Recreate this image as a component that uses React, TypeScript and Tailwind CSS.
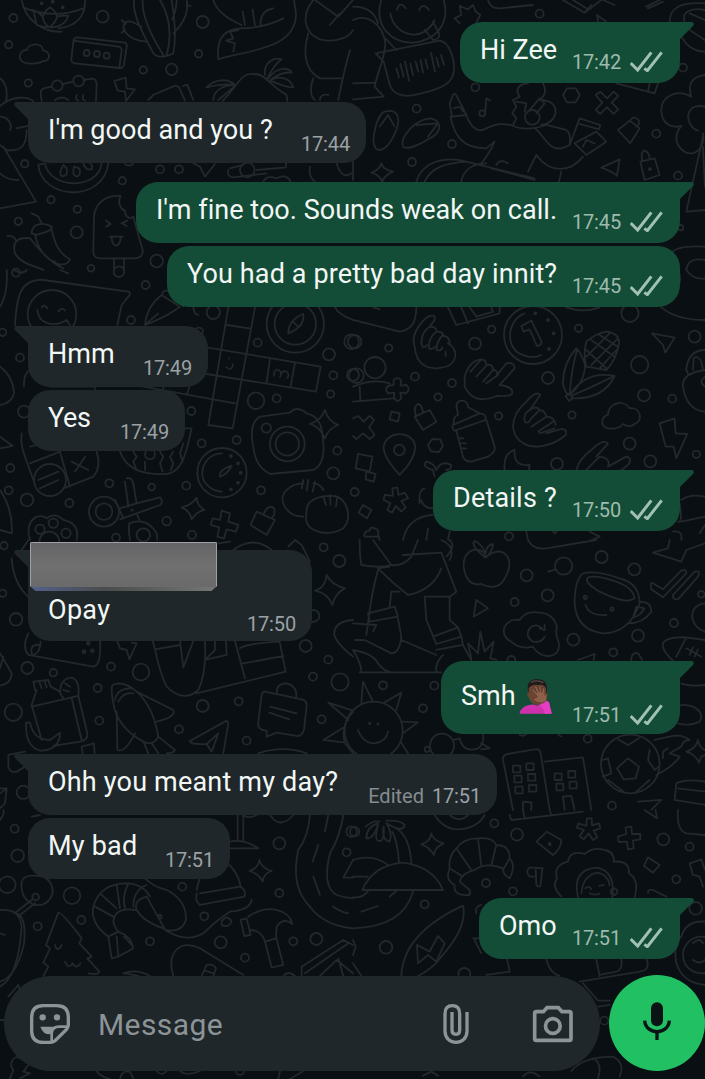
import { clsx } from 'clsx';

type Message = {
  text: string;
  time: string;
  sent?: boolean;
  tail?: boolean;
  edited?: boolean;
  emoji?: boolean;
  redacted?: boolean;
  // width, height and gap above the bubble
  box: string;
  tracking?: string;
};

const messages: Message[] = [
  { text: 'Hi Zee', time: '17:42', sent: true, tail: true, box: 'w-[220px] h-[61px]' },
  { text: "I'm good and you ?", time: '17:44', tail: true, box: 'w-[338px] h-[61px] mt-[19px]', tracking: 'tracking-[0.05px]' },
  { text: "I'm fine too. Sounds weak on call.", time: '17:45', sent: true, tail: true, box: 'w-[544px] h-[61px] mt-[19px]', tracking: 'tracking-[0.03px]' },
  { text: 'You had a pretty bad day innit?', time: '17:45', sent: true, box: 'w-[513px] h-[61px] mt-[3px]', tracking: 'tracking-[0.13px]' },
  { text: 'Hmm', time: '17:49', tail: true, box: 'w-[180px] h-[61px] mt-[19px]' },
  { text: 'Yes', time: '17:49', box: 'w-[157px] h-[61px] mt-[3px]', tracking: 'tracking-[-0.3px]' },
  { text: 'Details ?', time: '17:50', sent: true, tail: true, box: 'w-[247px] h-[61px] mt-[19px]', tracking: 'tracking-[0.2px]' },
  { text: 'Opay', time: '17:50', tail: true, redacted: true, box: 'w-[284px] h-[91px] mt-[19px]', tracking: 'tracking-[0.3px]' },
  { text: 'Smh', time: '17:51', sent: true, tail: true, emoji: true, box: 'w-[239px] h-[73px] mt-5' },
  { text: 'Ohh you meant my day?', time: '17:51', tail: true, edited: true, box: 'w-[469px] h-[61px] mt-5', tracking: 'tracking-[0.19px]' },
  { text: 'My bad', time: '17:51', box: 'w-[202px] h-[61px] mt-[3px]', tracking: 'tracking-[0.2px]' },
  { text: 'Omo', time: '17:51', sent: true, tail: true, box: 'w-[201px] h-[61px] mt-[19px]' },
];

type Sheet = { x: number; y: number; dots: number[][]; lines: string[] };

// Wallpaper doodles, drawn on eight sheets at three times their size
const sheets: Sheet[] = [
  {
    x: 0,
    y: 0,
    dots: [
      [40, 54, 12], [308, 50, 18], [608, 66, 18], [26, 134, 11], [596, 161, 11], [430, 210, 11], [515, 208, 17],
      [85, 249, 11], [74, 491, 11], [153, 599, 11], [232, 628, 11], [55, 664, 11], [230, 697, 18], [480, 508, 12],
      [537, 508, 12], [367, 542, 11], [470, 783, 19], [260, 159, 9], [291, 162, 9], [320, 167, 9], [273, 805, 10],
      [172, 257, 16], [236, 243, 16], [742, 510, 22], [125, 10, 3], [158, 5, 3], [188, 22, 3],
    ],
    lines: [
      // bowl and lotus
      'M65 0C75 60 130 98 185 95M255 0C258 50 225 80 175 85M70 22Q160 60 250 25M100 30Q115 35 128 50Q135 30 150 22Q165 30 172 50Q190 45 205 48C195 80 160 90 110 75ZM128 50Q130 70 145 80M172 50Q165 70 150 80',
      // cactus
      'M402 0C398 50 430 100 460 160Q475 180 520 160C530 110 525 60 515 0M428 0C425 50 455 110 490 165M480 0C510 50 515 110 500 165M438 125C380 120 355 80 380 65C400 60 410 75 425 80M365 60L378 72M375 90L365 98M520 100C560 60 565 30 560 0M530 0C530 30 520 50 516 60M560 15L572 18',
      'M232 112L375 128Q382 130 380 140L372 195Q368 206 358 204L225 190Q213 188 214 178L220 125Q222 112 232 112ZM220 122L355 140Q366 142 365 152L358 204',
      'M80 190C50 185 55 150 80 150C85 130 125 125 130 152C155 155 150 185 130 183C110 195 95 190 80 190Z',
      // fox tail
      'M655 178C650 130 660 90 720 85C790 85 840 60 850 55M655 178C740 150 890 150 888 40L882 0M715 90L690 95L700 115L678 122L705 130L700 155M640 0C650 35 690 60 725 75M728 35L735 75M758 30Q760 50 765 75M820 25C790 30 780 50 782 78',
      'M940 0C900 50 915 100 960 118C1010 130 1050 110 1059 90M945 0L1015 50L1059 0M990 75L1020 40M925 100C910 150 910 210 960 235L1025 235M940 235C930 260 930 290 945 300M1050 150Q1030 220 1015 300M960 300Q960 280 985 285',
      'M125 303L122 280Q122 265 140 263L155 260M190 252L220 245M250 240L275 236Q290 236 290 255L288 303M165 300Q185 285 205 300M230 285Q225 300 235 302M250 285Q245 300 255 302',
      'M343 243L377 233L380 265L405 268L378 303L375 275L353 272Z',
      'M445 300L460 285L525 257Q535 257 540 268L555 302M548 258L562 254L580 300',
      // pineapple top
      'M668 303C720 250 720 220 760 222C800 222 800 250 860 285L862 303M620 262C645 235 685 235 705 255C675 250 650 255 620 262M640 300C640 275 665 255 705 255M655 300L700 262M795 225C790 190 820 170 845 178C820 195 815 215 800 238M805 235C835 195 870 205 875 218C850 215 830 225 812 240C840 225 870 235 880 262C860 262 840 255 812 242',
      'M0 235C15 245 25 270 18 305M0 318C40 285 80 290 100 303M0 350C20 350 40 370 30 390M50 385L85 378M80 390C80 440 60 455 20 450L0 435M10 440L108 605L0 625M0 520Q20 540 55 540',
      'M115 495C125 600 310 610 325 490M135 490C150 570 295 570 305 490M115 495L135 490M190 495Q175 520 185 528Q205 530 200 505ZM222 500Q215 525 230 530Q245 525 238 505ZM250 490Q255 512 275 508Q280 495 270 490',
      // chillies
      'M95 640L115 650L125 670M95 700C95 670 130 665 155 680C160 690 130 700 110 705ZM105 705C115 750 140 780 165 785C170 795 200 800 210 778C175 760 165 730 155 690M22 708C40 705 45 715 50 725M45 760C35 725 55 710 90 715M45 760C60 790 110 800 130 810M90 715C110 740 150 790 190 805',
      'M300 775Q278 775 280 750L282 650C285 610 315 585 362 588C350 610 365 630 375 632C375 650 390 660 400 650L428 750Q430 775 400 775ZM318 662L332 672L318 680M382 662L365 670L380 678M330 710H368M335 712C335 745 362 745 362 712M342 778V810M372 778V810',
      'M690 505L730 495M685 510Q680 530 700 532L800 520M858 490V502L770 510M790 545Q800 525 830 535Q860 520 872 545M930 500Q925 530 945 545M580 490L600 500L615 530L645 492M375 492Q385 502 400 492M1010 490Q1025 540 1055 520',
    ],
  },
  {
    x: 353,
    y: 0,
    dots: [
      [560, 41, 12], [990, 203, 12], [367, 262, 12], [191, 326, 12], [297, 432, 12], [177, 486, 12], [910, 401, 12],
      [975, 527, 12], [538, 352, 22], [983, 683, 8], [388, 340, 9], [891, 507, 3],
    ],
    lines: [
      'M85 0C60 80 120 140 200 125C260 110 290 60 272 0M112 40C125 110 210 130 245 60M215 90L240 120Q262 118 258 100L240 65M132 30Q140 0 158 25M198 30Q210 5 228 30',
      'M305 55L325 45L320 18L345 28L360 15L368 35L382 45L370 68M305 55L320 70',
      'M0 60C40 40 90 70 97 130C95 180 75 210 65 260L92 290L0 298M0 250L65 248M0 20Q60 20 75 70M97 115L130 150',
      'M68 160L260 122C290 125 305 180 303 210C300 250 270 265 200 282C150 295 115 285 108 245L92 185Z',
      'M130 205L138 232M142 192L152 230M156 185L168 242M172 190L180 225M188 185L196 215M203 180L210 218M217 178L224 205M234 158L246 215M250 172L258 200M264 165L273 195',
      'M405 0Q410 25 440 25L540 15M630 0L695 38L745 0M660 0L705 28M695 38L715 15M785 15L750 0M880 20L920 0M885 25L930 5M735 65L732 45L760 65',
      'M950 65C950 20 990 5 1056 10M1056 30C1010 20 985 40 995 65M1056 155C1020 155 995 130 985 110M1056 120L1010 90M1010 40L1056 60',
      // dancer with a phone
      'M300 285L290 310L297 350L340 345C355 390 380 398 400 385C430 372 440 370 475 375M300 285Q305 275 312 290L325 315L340 345M303 325Q325 315 330 335M292 350C305 410 330 445 400 445L425 425Q410 460 385 490',
      'M480 375L490 355L478 340L490 320L480 300L500 290C480 260 510 250 525 250M570 250C585 280 570 290 560 300Q610 300 608 340Q600 370 565 375M490 305L520 310L515 335M530 330L560 295L575 310L550 340M480 378Q520 395 580 375L640 390Q655 400 650 435C590 470 580 410 545 385M665 430L730 395L760 425L700 465ZM690 440L700 420L725 430M650 435L680 355L742 375L738 388L680 372M550 465L525 515M550 465C590 520 650 520 690 470M625 515L618 545',
      'M397 335L400 295L412 302M630 285L642 265L668 265L680 285L668 307L642 307Z',
      'M728 285L742 275L762 295L782 275L796 288L776 308L796 328L782 342L762 322L742 342L728 330L748 308Z',
      'M1056 225C1010 230 1005 260 1015 290C970 265 925 290 925 330C925 375 960 385 985 378C950 420 985 465 1020 460C1040 455 1056 430 1050 400M1056 320Q1010 310 1005 350Q1010 385 1035 392',
      'M795 390L830 362L860 385L832 430ZM830 365Q840 345 855 358Q865 370 850 380',
      'M95 335C130 325 145 350 130 390C110 440 85 460 68 445C50 420 75 340 95 335ZM80 380L105 345L125 380M150 440C140 410 190 355 235 355C270 365 265 400 230 415C190 440 165 450 150 440ZM190 375L255 370L225 410',
      'M85 490Q90 510 120 515Q95 525 88 545Q80 525 55 518Q80 510 85 490Z',
      'M190 545C205 490 270 465 340 485L545 535M215 545C235 500 280 490 340 485M325 545C330 510 360 490 400 490M415 505L545 540M430 495Q440 475 465 490',
      'M745 503L800 478L792 528Q780 515 745 503M862 485L905 475L920 525L875 540ZM868 483Q862 450 878 452Q890 460 890 478M1050 410L1000 635L1056 630M1050 440L1056 560M790 250L905 280L915 250M885 275L890 250',
      'M1056 740Q970 735 955 760M1000 810Q1005 770 1056 780M0 470V540',
    ],
  },
  {
    x: 0,
    y: 270,
    dots: [
      [48, 8, 12], [357, 5, 16], [437, 45, 12], [393, 150, 12], [8, 187, 11], [60, 263, 12], [640, 127, 20],
      [597, 185, 12], [773, 218, 12], [987, 253, 18], [1000, 316, 12], [992, 372, 11], [768, 392, 25], [830, 385, 12],
      [574, 423, 12], [605, 520, 12], [710, 510, 12], [1012, 542, 12], [1000, 610, 18], [783, 661, 12], [328, 640, 12],
      [455, 651, 10], [559, 647, 12], [500, 753, 13], [576, 795, 12], [348, 803, 12], [208, 699, 12], [81, 690, 19],
      [31, 594, 12], [26, 661, 12], [72, 425, 18], [799, 474, 14], [1055, 215, 22], [1059, 315, 18], [886, 162, 86],
      [886, 162, 62], [862, 522, 52], [862, 522, 35], [666, 608, 74], [156, 133, 73], [312, 725, 45], [312, 725, 25],
      [430, 795, 20], [150, 630, 48], [120, 778, 14], [160, 760, 14], [198, 790, 14], [148, 815, 30], [450, 553, 15],
      [693, 558, 3], [714, 580, 3], [722, 608, 3], [714, 638, 3], [693, 658, 3], [396, 720, 2],
    ],
    lines: [
      'M45 165C50 80 60 25 130 30L385 65Q395 70 385 80L365 105L352 165M112 120C115 160 160 175 200 150L210 165M125 112Q132 100 142 115M175 125Q185 110 195 122M80 0Q70 15 40 0M180 0L205 10',
      'M435 165Q440 110 485 75L540 110Q500 140 435 165ZM485 75Q490 55 510 65L550 110M440 160L475 130M580 110Q580 130 595 135',
      // crossword
      'M685 112L625 465L698 475L765 112M680 165L748 175M620 232L962 290L948 365L620 312M430 350L705 400M810 265L800 338M885 278L872 350M570 345L562 370M490 350V358M285 350V358M150 350H280',
      'M865 190Q865 150 910 132Q915 170 865 190ZM878 155L895 170M1059 150Q1010 130 1005 110',
      'M780 440L870 428Q890 405 920 430Q965 440 968 500Q980 580 940 600L810 612Q765 590 760 530Q745 460 780 440ZM975 420Q985 455 1015 465Q985 475 975 505Q960 470 930 462Q965 450 975 420Z',
      'M666 550C630 550 605 580 607 615C610 645 640 665 666 665M660 620Q655 600 695 588Q680 615 660 620',
      'M910 740C860 740 830 690 860 660Q880 640 910 640M970 660Q960 640 940 640M920 720C920 690 960 675 1000 678C1040 680 1059 740 1030 775C990 800 920 790 918 745ZM978 705L970 680M992 705L990 675M1008 710L1012 680M905 655L910 630M920 662L925 630M938 665L945 635',
      // penknife
      'M345 690L370 745M380 625Q395 620 400 640L410 700L480 682Q492 695 480 705L360 748M360 715L410 700M375 635L385 710M412 735L418 750M388 760Q385 780 390 810M388 760Q440 740 470 790L472 810',
      'M590 683Q590 705 613 720Q590 725 575 748Q570 722 545 712Q575 705 590 683ZM665 722L690 730L685 755L715 765L708 785L680 778L672 805L652 800L658 772L632 765L638 745L660 750Z',
      'M770 725L825 750L800 795L752 765ZM790 735Q800 705 820 712Q830 730 815 745',
      'M65 490Q60 520 75 560L100 630M90 580L180 545L210 650M290 545Q305 590 280 620L190 655M215 575L265 600M255 560L225 605M115 630L175 605M120 655L175 630M90 530L110 525',
      'M360 545C380 600 430 615 500 612C550 605 560 540 575 475L555 475M400 545L410 560L400 575L410 600M435 575V600M480 545L490 560L480 580L488 605M520 545L510 560L520 580L512 600M550 520L540 550L548 575',
      'M90 810Q75 760 110 740Q130 735 140 745Q165 725 190 750Q240 760 230 810M0 500L38 528L0 535M0 660Q40 720 35 790L0 780M0 290Q40 320 42 370Q35 400 0 405M0 110Q25 70 20 0M72 350Q70 310 90 300',
    ],
  },
  {
    x: 353,
    y: 270,
    dots: [
      [5, 215, 20], [107, 234, 11], [66, 293, 32], [10, 317, 22], [186, 320, 12], [297, 339, 12], [255, 381, 11],
      [437, 438, 11], [657, 435, 11], [416, 178, 11], [366, 221, 18], [677, 175, 11], [585, 324, 18], [831, 130, 26],
      [860, 284, 26], [873, 376, 18], [958, 386, 12], [1025, 200, 18], [1030, 553, 11], [830, 521, 18], [892, 574, 18],
      [612, 582, 18], [139, 540, 16], [5, 666, 12], [468, 799, 12], [540, 195, 87], [547, 130, 3], [585, 150, 3],
      [602, 190, 3], [588, 237, 3],
    ],
    lines: [
      'M515 130C460 150 455 240 510 255Q540 268 565 255M505 168L535 152L566 215Q565 228 552 228L530 178L512 185Z',
      // hands
      'M185 230C170 190 210 150 225 140Q250 130 245 150L230 170M185 230C190 290 230 300 265 293Q300 290 307 260Q310 235 285 220M278 245V258M230 170Q205 185 205 220Q210 240 222 225M250 185Q225 205 228 235Q240 240 245 230M270 195Q250 215 250 240Q265 245 268 232M230 170Q250 170 252 185Q270 185 272 198Q290 200 290 220',
      'M335 320Q350 270 385 268Q400 270 400 285Q420 280 420 300Q435 300 432 315L460 280Q485 275 485 295L440 345Q480 350 478 370Q475 380 430 378C400 390 360 400 335 350ZM352 305L385 268M370 320L402 285M390 335L422 298M400 340L435 315',
      'M480 470Q480 430 520 395Q550 360 562 375L545 400L530 420Q510 430 515 455M480 470C485 520 530 535 570 528Q610 520 638 495Q645 475 620 478L580 490M530 420Q550 405 560 420Q575 420 580 440Q605 440 608 465M515 455Q525 465 535 445L560 420M535 470L580 440M555 485L600 455M560 490L605 475',
      'M670 600Q680 565 715 540Q750 505 765 520L730 560M700 600L740 560Q775 565 765 590L820 560Q840 565 825 585L805 600',
      // corn
      'M700 215Q730 190 760 185Q800 190 798 220Q790 270 760 300L700 290Q690 250 700 215ZM700 240L760 295M715 210L785 260M740 195L795 230M770 190L700 260M795 205L715 285M795 235L740 295M670 235Q630 280 630 340Q635 370 650 375Q700 330 695 280Q685 250 670 235ZM650 375Q655 300 672 240M650 375Q700 300 785 318Q750 390 655 385M655 378Q720 350 780 320M638 378L650 370L660 385L648 393Z',
      'M897 190L965 203L937 248L930 225ZM1056 240Q1005 240 1000 300L1005 310M1020 300L1022 265Q1035 255 1045 275L1050 300M1056 300Q985 310 990 350Q1000 420 1056 425M1056 320Q1035 335 1056 350',
      'M300 465L380 430Q400 430 398 450L305 482Q295 475 300 465M310 482L330 560Q335 575 355 575L405 560Q430 545 425 530L400 450M315 435L310 405Q315 390 330 392Q345 395 345 412L380 430M315 435Q300 440 302 460M318 505H332M321 520H340M326 535H340',
      'M185 440L230 420L250 455L210 480ZM188 435Q180 410 195 402Q205 402 210 425M115 425L140 430L135 455L110 448ZM0 445L15 438L32 455L50 438L63 450L48 472L65 495L50 507L30 490L10 507L0 498',
      'M140 615Q90 560 92 530C100 480 180 480 187 530Q185 570 140 615ZM225 525L238 507L262 508L270 528L258 546L234 544ZM15 552L58 560L50 605L8 595ZM40 605L68 612L62 635L38 628ZM30 705L55 720L42 745L17 728Z',
      'M120 678L118 655L133 652L136 675L155 668L165 685L145 693L158 712L145 725L128 708L118 728L103 720L112 700L92 690L95 675Z',
      'M122 345V330Q135 318 145 332L142 347L160 345Q175 360 158 370L142 368L145 385Q135 400 123 385L124 368L105 370Q92 355 108 347ZM0 350Q60 325 110 340M0 395L120 385M20 350L22 390',
      'M765 475C740 470 745 440 765 435C765 400 810 385 830 415C865 410 870 455 845 462Q830 475 810 462Q795 480 765 475ZM920 460L965 445L968 490L1003 492L970 565L962 530L938 530ZM485 540Q450 550 455 600M485 540Q480 590 530 585L528 600',
      'M245 620L240 600Q205 590 220 575Q245 580 250 600Q265 570 295 585Q295 600 280 600M285 112L310 165L440 130L440 112M325 112L345 160M350 112L370 140L420 125L415 112M190 112Q190 180 140 185L0 150M60 112L80 118M640 112Q690 130 740 112M925 112Q970 150 1056 150M975 0Q985 15 980 40M1000 0Q1020 30 1056 25',
      'M150 810Q165 740 240 735M200 700Q195 660 215 655M205 690Q210 715 240 715M225 775L220 810M290 785L285 810M1056 680Q1010 670 985 690M980 700Q990 760 975 755M985 755L1056 740M1040 790L1056 765M960 785Q990 780 985 810M520 785L525 810M600 785L605 790L612 783M710 785L740 800L715 810M35 800Q30 785 50 782Q50 768 65 775Q80 780 75 795L80 810M35 800H78',
    ],
  },
  {
    x: 0,
    y: 540,
    dots: [
      [12, 17, 11], [48, 238, 19], [8, 160, 11], [82, 384, 18], [160, 398, 11], [333, 380, 12], [423, 396, 25],
      [293, 444, 12], [40, 517, 26], [298, 542, 12], [608, 498, 18], [537, 568, 12], [716, 484, 12], [740, 602, 12],
      [917, 318, 18], [985, 359, 12], [939, 410, 12], [1020, 426, 26], [965, 538, 12], [971, 22, 12], [1018, 63, 18],
      [940, 228, 18], [265, 310, 4], [252, 335, 4], [277, 332, 4], [70, 757, 20],
    ],
    lines: [
      'M35 55Q40 130 85 170M65 30L85 0M980 105Q995 135 1035 145Q1005 160 997 195Q985 160 945 152Q975 145 980 105ZM700 30Q760 -15 815 30M865 20L885 0L905 15L930 65M655 10L690 5',
      'M85 280Q65 320 85 345L280 380Q305 375 300 303M85 345Q120 350 122 305M95 340Q90 310 120 315M352 303L360 325L380 330L388 358L410 310L395 308',
      'M458 303L465 328L540 315M465 328Q480 400 500 440Q550 490 595 450Q620 400 615 303M540 303L550 382L580 303M590 460L857 395L840 310M705 303L735 415M720 325Q740 310 840 305M722 372L850 348M645 303V330L615 360L680 345L678 303',
      'M1059 240Q1000 245 1003 285Q1010 310 1059 350M0 340L35 400Q35 430 0 437M0 385L10 350',
      // juice, bread and banana
      'M105 450L100 425L145 420L152 440L180 455M118 425L125 445M133 422L140 442M110 450L95 495L125 600M95 500L235 468L262 580Q265 600 240 605L160 618M180 460Q180 415 215 413Q240 420 235 468M180 460L190 475M195 430L210 440M190 450L207 455M215 475L245 600M78 548L90 548Q100 600 150 600L180 578Q180 630 120 632Q75 620 78 548',
      'M337 435Q370 420 410 455Q460 500 475 590Q460 620 430 605Q350 560 340 490Q332 450 337 435ZM345 480Q350 445 395 445M355 485Q370 455 400 460M410 455L520 510Q530 530 470 545M350 515L352 630Q375 640 405 580M430 605L445 640M475 590L525 630Q520 640 500 640M455 610L475 640',
      'M570 603L680 542L685 550L670 640M570 603Q570 615 620 612L635 635M620 612L655 580L635 635M248 640L245 620L282 610L284 640M775 640Q850 615 920 640',
      'M795 455L905 478Q922 482 920 498L912 570Q905 590 890 588L830 578L800 590L800 572Q770 570 775 545L785 465Q787 455 795 455M830 458Q830 430 860 430Q895 440 888 475M810 500L890 520M808 518L868 538',
      'M1045 540L985 488L1059 512M1035 560L970 600L1035 608M1059 515Q1020 560 1035 610L1059 640M75 635L25 645V680Q30 700 50 695L75 680M0 745H20L15 790L0 805M0 760L20 745',
    ],
  },
  {
    x: 353,
    y: 540,
    dots: [
      [746, 51, 18], [521, 106, 18], [632, 78, 26], [584, 166, 18], [485, 186, 12], [844, 88, 18], [661, 299, 18],
      [855, 287, 18], [963, 249, 12], [781, 337, 12], [475, 360, 12], [90, 436, 12], [244, 437, 12], [210, 505, 12],
      [704, 596, 12], [777, 797, 12], [697, 172, 5], [777, 207, 5], [50, 550, 2], [75, 552, 2], [832, 672, 88],
      [62, 572, 87], [267, 617, 36], [223, 628, 8], [1045, 163, 10],
    ],
    lines: [
      'M608 88L585 95M395 38C360 15 330 40 332 80Q340 140 385 132Q420 150 445 130Q475 90 468 60Q455 25 420 38L395 52ZM395 50Q350 15 365 3Q385 10 398 40Q400 15 420 12Q420 30 400 52',
      // smiling cup
      'M690 100Q665 120 665 190Q670 270 750 280Q830 280 860 190Q860 130 800 115Q730 90 690 100ZM705 112Q690 125 740 155Q820 195 845 175Q840 140 780 122Q730 105 705 112ZM860 185Q895 185 895 215Q870 250 825 250M850 200L875 205Q860 230 840 232ZM697 195Q710 230 760 225',
      'M900 130Q890 125 895 148L930 172L1000 100Q1000 85 985 92L930 148ZM960 165L1025 95Q1045 90 1035 110L975 178Q958 180 960 165',
      'M475 305Q445 290 455 260Q470 235 500 240Q520 210 560 218Q600 220 612 260Q605 280 618 310Q620 350 580 348Q555 345 540 320Q500 330 475 305ZM572 270Q550 245 530 265Q515 290 540 305Q565 310 575 290M560 265L575 270V255',
      'M355 355L345 310L375 340L382 275L395 335L422 305L412 355L430 360M370 180L405 205L362 230Z',
      // hiker
      'M75 90Q55 160 45 250L40 285M20 0Q20 50 25 75Q80 85 115 75M60 0L115 75Q150 80 175 50L195 0M75 85Q120 130 165 165Q240 150 265 85M75 85L110 80M150 45L265 38L310 155L290 170L215 170L220 240L245 300M265 0Q310 20 290 60M290 0Q310 20 280 50M290 170V240L315 262M110 200L115 155H140M45 220L125 200L135 230L50 245ZM135 235L145 290Q140 340 115 340L35 300M240 290L315 262L325 290L250 312ZM325 290L330 315L250 330M330 315L355 360M270 345Q245 370 250 395M20 397H265M0 330Q25 370 25 395M0 330Q60 340 75 370Q95 395 110 395M145 300L250 345M0 250L70 255L60 275M5 300H30',
      'M525 0Q540 30 580 25L730 0M900 38L985 65L1000 30L1056 10M900 38L945 25L950 0M960 362Q925 330 930 310Q940 290 1000 292L1056 300M970 350L1000 292M1000 325L1045 350M1010 345L1020 322M1025 350L1035 328M1056 190Q1015 195 1018 235Q1025 265 1056 275M985 430Q1010 440 1056 435M975 500Q985 490 1020 500Q1056 520 1040 545Q1010 560 975 550M675 360L725 342L722 360M835 360Q835 335 855 340L868 360',
      'M25 490L30 425L60 485M90 490L145 458L130 510M145 545L195 547L150 580M145 608L165 640M15 570Q30 610 65 610Q100 605 105 575M320 595Q330 640 375 625Q395 610 390 585M385 610L410 625L385 628M300 600L320 595M500 585L510 588L520 583M615 583L625 590',
      // buildings
      'M480 810L450 660Q448 645 465 642L545 628Q560 625 563 640L590 810M575 665L690 652L715 810M510 810V785L535 787V810M635 810L630 770L655 768L665 810M480 677H502V697H480ZM520 670H542V690H520ZM484 707H506V727H484ZM525 702H547V722H525ZM487 740H509V760H487ZM528 735H550V755H528ZM605 700H626V720H605ZM646 693H667V713H646ZM610 731H631V751H610ZM650 725H671V745H650Z',
      'M825 655L858 680L848 715L812 718L792 685ZM795 598L825 615L858 595M890 630L885 660L905 690L918 680M750 710L775 700L765 655L750 660M765 720L812 755M850 755L890 720',
      'M1056 630Q1040 625 1035 600Q1030 625 1000 635Q1030 645 1038 668L1045 650L1056 645M905 600L950 590Q985 580 1010 600Q990 600 985 620L950 640L980 650Q960 680 910 705M930 655V635L945 625M970 730Q1000 715 1056 725M970 730L965 780L1056 795M975 745L1056 755M855 785L925 780L895 810',
    ],
  },
  {
    x: 0,
    y: 810,
    dots: [
      [44, 56, 12], [53, 137, 19], [22, 224, 25], [216, 257, 25], [244, 330, 12], [113, 349, 12], [107, 261, 10],
      [450, 394, 12], [547, 230, 12], [613, 319, 12], [662, 397, 18], [735, 443, 12], [838, 249, 12], [838, 100, 18],
      [949, 387, 18], [880, 394, 12], [1040, 127, 12], [1055, 65, 16], [480, 320, 5], [720, 783, 12],
    ],
    lines: [
      'M65 215Q70 190 130 200Q160 215 158 250Q145 290 105 285Q60 270 65 215ZM95 270L50 305M105 280L60 315M42 305L62 320',
      'M0 300Q60 295 65 350Q55 500 0 530M50 310Q80 320 72 400Q50 500 0 515M0 370L15 375M0 30Q15 10 10 0M95 20L120 15',
      // fir tree
      'M130 498L145 470L130 458L150 415L138 405L175 308Q185 305 245 385L238 400L275 440L262 445L298 485Q295 495 265 490M165 405Q172 430 185 405M195 455Q205 480 218 460Q228 480 242 460',
      // shrimp
      'M325 380Q270 340 280 290Q300 220 380 220Q430 222 450 260M440 260Q400 270 410 300Q430 335 490 355M340 335Q345 290 405 300M340 335Q345 355 355 365L325 380L335 445L355 440L400 415Q395 380 355 365M355 440L350 380M372 380L395 405M285 290L340 320M300 250L350 295M350 225L360 295M385 220Q365 260 375 295M440 225Q400 240 400 290M440 260L495 358M435 205Q460 230 500 240Q560 270 558 330Q545 370 495 360Q560 400 610 370Q650 330 690 305Q750 300 755 270M665 335Q680 310 695 335Q685 355 665 345Z',
      'M590 240Q595 215 600 205M600 250L720 230Q740 240 733 260L600 285Q585 275 590 250M688 165Q715 190 722 230M690 115H775Q730 85 690 95M713 15V88M730 15V90M730 15Q745 28 770 15',
      'M778 150Q785 175 815 183Q790 190 788 215Q775 190 748 183Q775 175 778 150ZM810 15Q840 60 880 15',
      'M930 15Q925 80 895 120Q870 230 930 290Q970 345 1059 355M1030 15Q1020 80 990 130Q965 230 1010 255Q1030 262 1059 265M985 15L975 65M955 105L938 155M940 200L960 255M1000 290Q1020 305 1045 310M1059 150L1030 203H1059',
      'M722 330L740 325L752 375L733 378ZM745 320Q790 290 830 300Q870 310 877 342Q850 320 830 350L828 380L850 465L815 473L795 395Q785 360 750 360M795 395L828 385',
      'M520 498Q500 430 545 408Q570 400 600 415L730 495M605 498L620 465Q640 460 648 475L640 498M615 482L640 490M905 498V470L1030 390L1059 405M915 490L1045 400M1015 445L1030 498M960 498L1010 450L1059 490M370 490Q410 475 450 498M375 490L415 498M850 498Q865 480 885 498',
      'M30 805L40 780Q30 770 35 755Q45 735 60 745M85 765L70 785L90 790L60 805M360 807Q365 780 390 785L400 805M290 783Q300 800 330 807M540 783Q560 800 600 783M840 783L835 807M910 783L870 807M25 560L55 525L60 540M0 630H12M470 783Q485 800 500 783',
    ],
  },
  {
    x: 353,
    y: 810,
    dots: [
      [424, 40, 12], [492, 74, 18], [399, 219, 12], [480, 244, 12], [215, 283, 12], [99, 412, 19], [334, 492, 18],
      [931, 88, 18], [1010, 110, 12], [970, 208, 12], [1028, 295, 19], [590, 102, 3], [754, 632, 12], [783, 245, 10],
      [5, 65, 14], [1045, 435, 55],
    ],
    lines: [
      // beach
      'M28 240Q60 165 150 158Q240 170 270 240ZM118 65Q135 100 138 158M130 55Q170 80 175 158M40 85Q40 50 75 40M40 85Q60 90 75 45Q60 100 85 92Q95 80 92 50Q85 90 110 95Q120 70 100 40Q150 70 155 45Q145 30 100 32M38 50Q60 30 80 35M0 150Q60 130 105 165M0 355Q150 350 180 245M25 305L75 288M110 260L130 243M0 200H45M0 262Q30 265 45 243',
      'M235 70Q240 92 272 100Q245 112 243 135Q230 112 205 103Q232 95 235 70Z',
      'M350 255Q300 260 305 225Q275 210 290 175Q285 140 310 115Q330 85 375 85Q420 80 430 105Q470 105 470 145Q490 165 470 205Q450 195 450 175Q400 155 365 180Q325 190 320 215L350 240Q355 255 340 255M290 175L330 200M310 115L355 180M375 85L385 168M430 105L415 165M470 145L450 180',
      'M550 95L582 65L625 90Q625 115 600 135ZM700 48L702 25L716 25L717 46L738 40L742 55L722 62L733 82L720 90L707 70L692 88L680 78L693 60L672 53L676 40ZM820 72L818 52L835 50L837 72L862 72V88L840 92L842 115L825 118L822 95L797 96L795 80Z',
      // girl with curly hair
      'M625 260Q595 230 612 205Q600 165 645 155Q650 120 695 132Q720 110 755 120Q785 125 782 155Q830 150 828 190Q860 210 845 262M675 262Q660 195 705 178Q740 165 765 190Q785 215 778 262M685 250Q690 195 735 188Q765 195 770 225M697 235Q708 225 715 237M740 228L752 225M710 250Q735 258 740 250',
      'M570 175L530 172Q515 185 530 200L550 200M548 175L550 225Q560 235 563 225L568 175M885 142L920 165L900 188L873 168ZM1056 180L1045 148L1010 160L1020 195L1040 200L1050 230',
      'M470 15L475 30L690 5M510 0L515 25M590 0L595 15M875 0L912 25L908 0M975 0Q970 60 1000 70L1056 75M245 15Q280 70 340 55Q380 45 395 15M290 15Q320 40 345 15',
      'M145 498Q150 370 330 287Q345 350 265 440Q240 475 195 498M192 405L230 425L255 378L275 400L250 455L225 435L195 460ZM400 495L470 485L462 445M360 385H380M385 430L365 390M370 310Q365 290 385 285M0 390L8 410L0 435M0 460L25 498',
      'M580 447Q590 490 620 498M730 447L740 498M805 447Q810 480 790 485L740 495M880 447Q895 480 860 485L680 515M1056 335Q1000 330 985 380Q960 400 970 460Q990 520 1056 525M1020 400Q1040 380 1050 400M1020 450Q1040 465 1056 450M885 250Q885 235 900 240L940 260M690 520L735 572H770M735 590L770 585M655 783Q690 740 780 740Q810 755 805 783L800 800M720 745Q750 760 735 805M210 797L235 785L255 797M510 800Q530 775 560 800',
    ],
  },
];

function Wallpaper() {
  return (
    <svg
      className="absolute inset-0"
      width="705"
      height="1079"
      viewBox="0 0 705 1079"
      fill="none"
      stroke="#23282c"
      strokeWidth="5.400"
      strokeLinecap="round"
      strokeLinejoin="round"
      aria-hidden="true"
    >
      {sheets.map((sheet) => (
        <g key={`${sheet.x}-${sheet.y}`} transform={`translate(${sheet.x} ${sheet.y}) scale(0.3333)`}>
          {sheet.dots.map(([cx, cy, r]) => (
            <circle key={`${cx}-${cy}-${r}`} cx={cx} cy={cy} r={r} />
          ))}
          {sheet.lines.map((d) => (
            <path key={d} d={d} />
          ))}
        </g>
      ))}
      {/* crossword squiggles */}
      <path d="M226 367q6 5 7-3M229 358v1M274 376q0-9 6-5q2 3 0 6q2-8 7-5q3 3 0 6" strokeWidth="1.600" />
    </svg>
  );
}

function Ticks() {
  return (
    <svg className="mb-[2px] ml-[9px]" width="33" height="21" viewBox="831 151 99 63" fill="none" stroke="#a1c1b2" strokeWidth="9">
      <path d="M833 187L854 208L895 155M874 203L883 210L926 155" />
    </svg>
  );
}

function Tail({ sent }: { sent?: boolean }) {
  return (
    <svg
      className={clsx('absolute top-0', sent ? '-right-[14px] text-[#144d37]' : '-left-[14px] -scale-x-100 text-[#1f272a]')}
      width="15"
      height="17"
      viewBox="0 0 15 17"
      fill="currentColor"
    >
      <path d="M0 0H13Q16 1 14 4L1 17H0Z" />
    </svg>
  );
}

function Facepalm() {
  return (
    <svg className="ml-[3px] mt-[17px]" width="34" height="38" viewBox="0 0 102 114">
      <path d="M2 107Q4 87 30 81Q44 77 55 83L76 68Q91 67 92 80L99 107Z" fill="#cf31ad" />
      <path d="M62 84Q72 66 84 69Q93 72 92 84L98 107H77Q77 91 62 84Z" fill="#e33dc3" />
      <path d="M26 29Q26 3 55 3Q84 4 84 31L82 51L28 45Z" fill="#211a19" />
      <path d="M29 31Q39 18 57 21Q76 18 81 31L82 55Q76 79 55 81Q34 78 29 58L23 48L29 43Z" fill="#6b4534" />
      <path d="M36 13Q54 4 73 14" stroke="#554946" strokeWidth="4" fill="none" />
      <path d="M41 64L55 56L37 35L42 32L54 45L46 25L52 23L61 42L59 22L65 23L68 43L72 28L77 30L78 52L85 45L83 65Q76 78 65 75Q53 75 41 64Z" fill="#8f6049" stroke="#54352a" strokeWidth="2" />
    </svg>
  );
}

// Grey block covering the first line of a message
function Redaction() {
  return (
    <div className="absolute left-[2px] -top-2 z-10 h-[49px] w-[187px] bg-[#454545] [clip-path:polygon(0_0,100%_0,100%_90%,97%_100%,3%_100%,0_90%)]">
      <div className="h-[45px] rounded-t-[2px] border-x border-t border-[#a0a0a5] bg-linear-to-b from-[#656567] via-[#707070] to-[#6a6a6a]" />
      <div className="h-1 bg-linear-to-r from-[#52618d] via-[#4b4b4b] via-40% to-[#777777]" />
    </div>
  );
}

function Bubble({ message }: { message: Message }) {
  const { text, time, sent, tail, edited, emoji, redacted, box, tracking } = message;

  return (
    <div
      className={clsx(
        'relative flex justify-between rounded-[22px] pl-5',
        box,
        sent ? 'self-end bg-[#144d37] pr-[17px]' : 'self-start bg-[#1f272a] pr-4',
        tail && (sent ? 'rounded-tr-none' : 'rounded-tl-none'),
      )}
    >
      {tail && <Tail sent={sent} />}
      {redacted && <Redaction />}
      <div className="flex">
        <p
          className={clsx(
            'text-[27px] leading-8 whitespace-nowrap text-[#f2f7f5]',
            tracking,
            redacted ? 'mt-11' : emoji ? 'mt-[19px]' : 'mt-3',
          )}
        >
          {text}
        </p>
        {emoji && <Facepalm />}
      </div>
      <div
        className={clsx(
          'flex items-end self-end text-xl leading-6 tracking-[-0.15px]',
          sent ? 'text-[#9dbbae]' : 'text-[#9ba1a4]',
          redacted ? 'mb-[5px]' : sent && !emoji ? 'mb-[9px]' : 'mb-[7px]',
        )}
      >
        {edited && <span className="mr-2 tracking-normal text-[#858c90]">Edited</span>}
        <span>{time}</span>
        {sent && <Ticks />}
      </div>
    </div>
  );
}

function Composer() {
  return (
    <div className="mt-4 flex items-end pl-1">
      <div className="flex h-[95px] w-[596px] items-center rounded-full bg-[#1f272a] pr-[26px] pl-[26px] text-[#8d9497]">
        <svg width="40" height="40" viewBox="90 99 120 120" fill="none" stroke="currentColor" strokeWidth="10">
          <path d="M130 104H170Q205 104 205 139V162Q204 170 199 176L165 209Q159 214 151 214H130Q95 214 95 179V139Q95 104 130 104Z" />
          <path d="M155 213V188Q156 167 178 167H205" strokeWidth="8" />
          <path d="M121 167H170Q153 172 152 190Q129 191 121 167Z" fill="currentColor" stroke="none" />
          <circle cx="128" cy="139" r="9.500" fill="currentColor" stroke="none" />
          <circle cx="171" cy="139" r="9.500" fill="currentColor" stroke="none" />
        </svg>
        <span className="mt-0.5 ml-7 text-[30px] leading-9 tracking-[0.4px]">Message</span>
        <svg className="ml-auto" width="26" height="40" viewBox="71 99 78 120" fill="none" stroke="currentColor" strokeWidth="10">
          <path d="M143 123V180C143 202 128 214 110 214S77 202 77 180V128C77 112 85 104 99 104S121 112 121 128V178C121 186 117 190 110 190S98 186 98 178V123" />
        </svg>
        <svg className="ml-[63px]" width="42" height="40" viewBox="337 99 126 120" fill="none" stroke="currentColor" strokeWidth="11">
          <path d="M350 122H371L382 110H416L427 122H449Q454 122 454 127V203Q454 208 449 208H350Q345 208 345 203V127Q345 122 350 122Z" />
          <circle cx="399.500" cy="165" r="22" />
        </svg>
      </div>
      <div className="ml-[9px] flex size-24 shrink-0 items-center justify-center rounded-full bg-[#21c063]">
        <svg className="-mt-0.5" width="30" height="40" viewBox="666 98 90 120" fill="none" stroke="#0b1414" strokeWidth="10">
          <rect x="693" y="99" width="36" height="72" rx="18" fill="#0b1414" stroke="none" />
          <path d="M674 154C677 198 745 198 748 154M711 187V212" />
        </svg>
      </div>
    </div>
  );
}

export default function App() {
  return (
    <main className="relative h-[1079px] w-[705px] overflow-hidden bg-[#0a0f13] font-[Roboto,sans-serif]">
      <Wallpaper />
      <div className="relative">
        <div className="flex flex-col pt-[22px] pr-[25px] pl-7">
          {messages.map((message, i) => (
            <Bubble key={i} message={message} />
          ))}
        </div>
        <Composer />
      </div>
    </main>
  );
}
